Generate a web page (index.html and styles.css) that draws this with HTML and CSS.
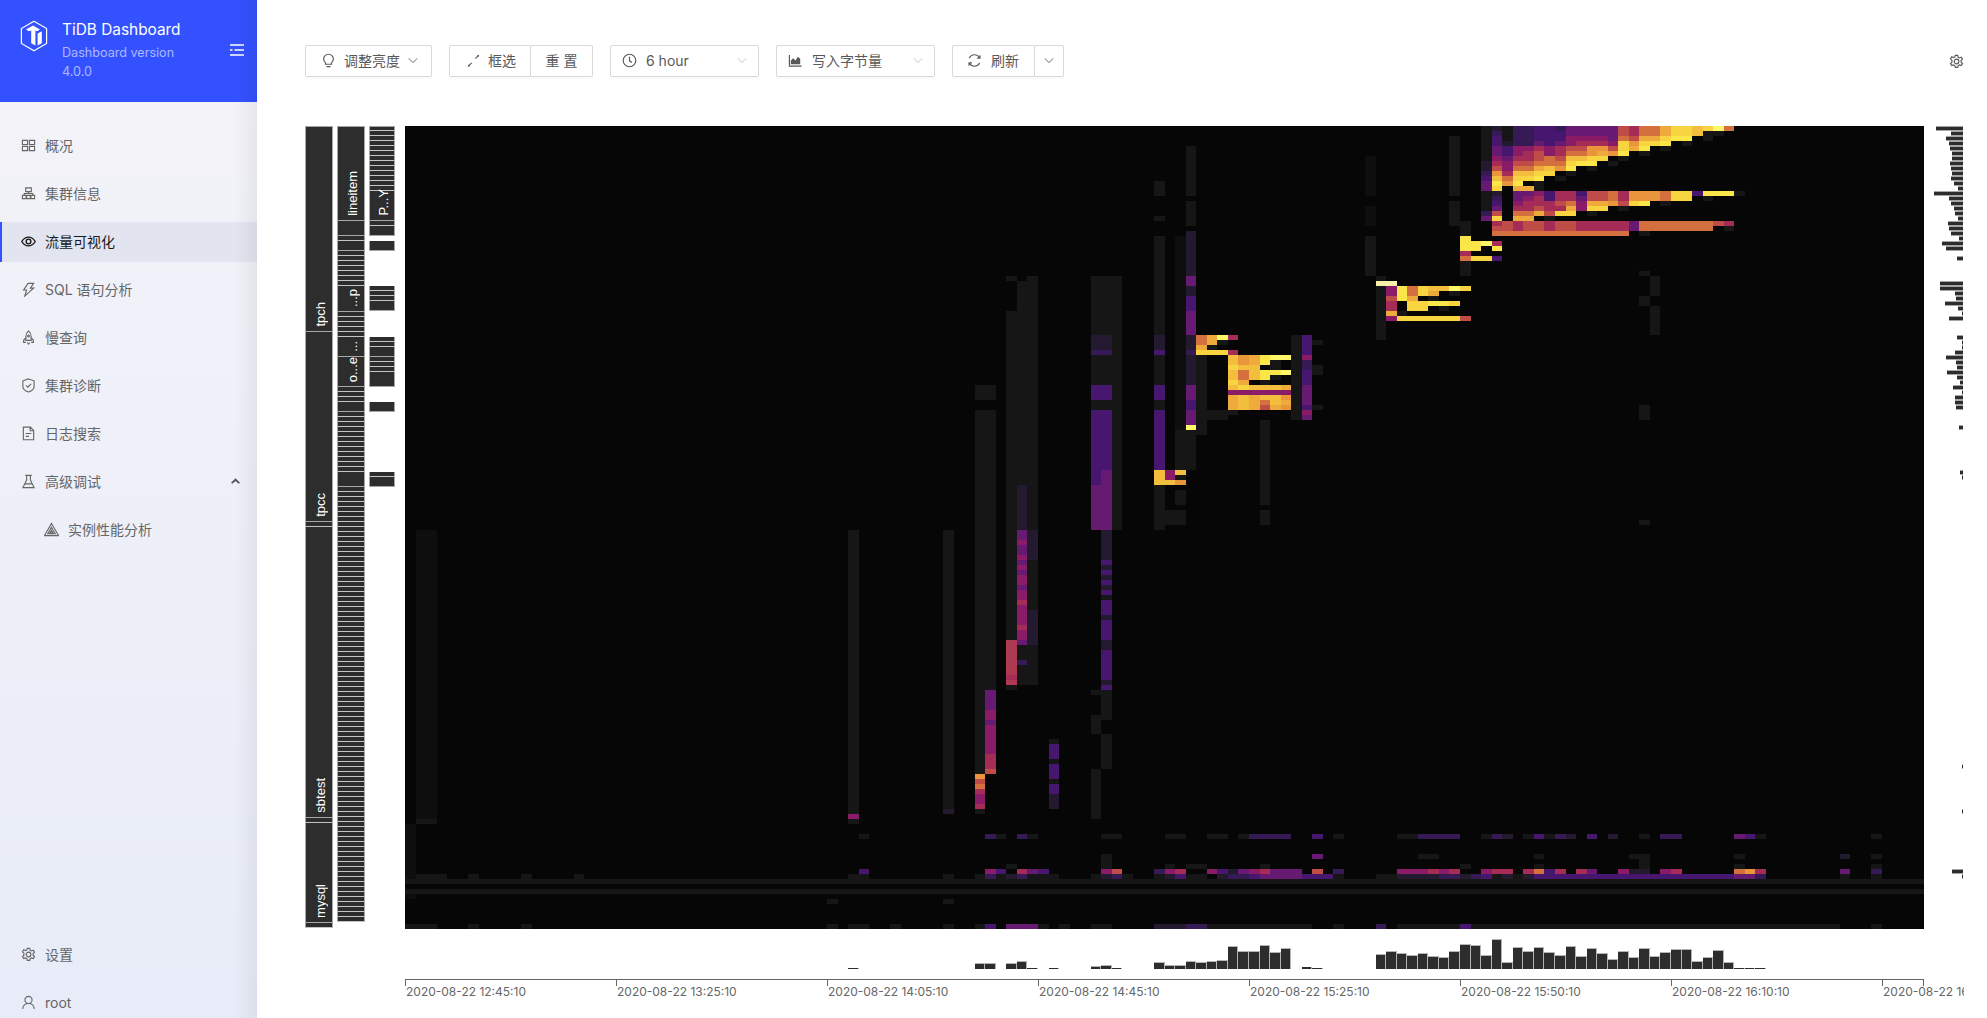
FILE: index.html
```html
<!DOCTYPE html>
<html lang="zh">
<head>
<meta charset="utf-8">
<title>TiDB Dashboard</title>
<link rel="stylesheet" href="styles.css">
</head>
<body>
<aside class="sidebar">
  <header class="brand">
    <svg class="logo" viewBox="0 0 28 32"><path class="logo-hex" d="M14 1.2 26.6 8.5V23.5L14 30.8 1.4 23.5V8.5Z"/><path class="logo-fill" d="M6 9.6 13 5.6 20 9.6 17 11.3 15.4 10.4V25.6L11.2 23.2V10.4L9 11.3ZM17.6 13.6 21.8 11.2V23.2L17.6 25.6Z"/></svg>
    <div class="brand-text">
      <div class="brand-title">TiDB Dashboard</div>
      <div class="brand-sub">Dashboard version</div>
      <div class="brand-sub">4.0.0</div>
    </div>
    <svg class="fold" viewBox="0 0 14 12"><path d="M0 1H14M4.500 6H14M0 11H14M0 6H2.500"/></svg>
  </header>
  <nav class="nav">
    <a class="nav-item"><svg class="ico" viewBox="0 0 16 16"><path d="M1.500 2.500h5.500v4.500h-5.500zM9 2.500h5.500v4.500H9zM1.500 9h5.500v4.500h-5.500zM9 9h5.500v4.500H9z"/></svg><span>概况</span></a>
    <a class="nav-item"><svg class="ico" viewBox="0 0 16 16"><path d="M5 2h6v4H5zM1.500 10h4v3.500h-4zM6 10h4v3.500H6zM10.500 10h4v3.500h-4zM8 6v2M3.500 10V8h9v2"/></svg><span>集群信息</span></a>
    <a class="nav-item active"><svg class="ico" viewBox="0 0 16 16"><path d="M.8 8C3 4.400 5.300 3.300 8 3.300s5 1.100 7.200 4.700C13 11.600 10.700 12.700 8 12.700S3 11.600.8 8Z"/><circle cx="8" cy="8" r="2.500"/></svg><span>流量可视化</span></a>
    <a class="nav-item"><svg class="ico" viewBox="0 0 16 16"><path d="M7.500 1.500h6L10 6.500h3.500L4 15l2-6.500H2.800Z"/></svg><span>SQL 语句分析</span></a>
    <a class="nav-item"><svg class="ico" viewBox="0 0 16 16"><path d="M8 1c2.200 1.800 2.800 4 2.800 6v4H5.200V7C5.200 5 5.800 2.800 8 1ZM5.200 8 2.800 11v2.200h2.400M10.800 8l2.400 3v2.200h-2.400M6.800 13.500 8 15l1.200-1.500"/><circle cx="8" cy="6.500" r="1"/></svg><span>慢查询</span></a>
    <a class="nav-item"><svg class="ico" viewBox="0 0 16 16"><path d="M8 1 14 3v6c0 3-3 5-6 6-3-1-6-3-6-6V3ZM5.300 7.800l2 2 3.500-3.600"/></svg><span>集群诊断</span></a>
    <a class="nav-item"><svg class="ico" viewBox="0 0 16 16"><path d="M2.500 1.200H10l3.500 3.500v10H2.500ZM9.800 1.500v3.500h3.500M5 8h6M5 11h3.500"/></svg><span>日志搜索</span></a>
    <a class="nav-item"><svg class="ico" viewBox="0 0 16 16"><path d="M4.500 1.500h7M6 1.500v5L2 14.500h12L10 6.500v-5M4.500 10.500h7"/></svg><span>高级调试</span><svg class="caret" viewBox="0 0 10 6"><path d="M5 0 10 5 8.500 6 5 3 1.500 6 0 5Z"/></svg></a>
    <a class="nav-item sub"><svg class="ico" viewBox="0 0 16 16"><path d="M8 1.500 15.500 14.500H.5ZM8 5.500 12 12.500H4ZM8 9 9.500 11.500h-3Z"/></svg><span>实例性能分析</span></a>
  </nav>
  <div class="nav-foot">
    <a class="nav-item"><svg class="ico" viewBox="0 0 16 16"><use href="#gear"/></svg><span>设置</span></a>
    <a class="nav-item"><svg class="ico" viewBox="0 0 16 16"><path d="M8 1.500a3.800 3.800 0 1 1 0 7.600 3.800 3.800 0 0 1 0-7.600ZM1.800 15c.3-3.600 2.800-5.900 6.200-5.900s5.900 2.300 6.200 5.900"/></svg><span>root</span></a>
  </div>
</aside>

<main class="main">
  <div class="toolbar">
    <button class="btn w-bright"><svg class="bi" viewBox="0 0 16 16"><path d="M4.800 10.500C3.500 9.500 2.800 8 2.800 6.500a5.200 5.200 0 1 1 10.400 0c0 1.500-.7 3-2 4V12H4.800ZM5.800 14.500h4.400"/></svg><span>调整亮度</span><svg class="chev" viewBox="0 0 12 8"><path d="M1 1.500 6 6.500 11 1.500"/></svg></button>
    <div class="group">
      <button class="btn w-select"><svg class="bi" viewBox="0 0 16 16"><path d="M2.500 14 6 10.500M10 6 13.500 2.500"/><circle cx="3" cy="13.500" r="1" class="solid"/><circle cx="13" cy="3" r="1" class="solid"/></svg><span>框选</span></button>
      <button class="btn w-reset"><span>重 置</span></button>
    </div>
    <div class="select w-range"><svg class="bi" viewBox="0 0 16 16"><circle cx="8" cy="8" r="6.700"/><path d="M8 4v4.500l2.500 1.500"/></svg><span class="latin">6 hour</span><svg class="chev light" viewBox="0 0 12 8"><path d="M1 1.500 6 6.500 11 1.500"/></svg></div>
    <div class="select w-type"><svg class="bi" viewBox="0 0 16 16"><path class="solid" d="M3 12V8l2.500-2.500L8 8l2.500-4L13 6v6Z"/><path d="M1.500 2v12h13"/></svg><span>写入字节量</span><svg class="chev light" viewBox="0 0 12 8"><path d="M1 1.500 6 6.500 11 1.500"/></svg></div>
    <div class="group">
      <button class="btn w-refresh"><svg class="bi" viewBox="0 0 16 16"><path d="M13.500 5.500A6 6 0 0 0 2.500 5.500M2.500 10.500a6 6 0 0 0 11 0M13.800 2.500v3h-3M2.200 13.500v-3h3"/></svg><span>刷新</span></button>
      <button class="btn w-more"><svg class="chev" viewBox="0 0 12 8"><path d="M1 1.500 6 6.500 11 1.500"/></svg></button>
    </div>
    <svg class="settings" viewBox="0 0 16 16"><use href="#gear"/></svg>
  </div>

  <section class="chart">
    <div class="labels" id="labels"></div>
    <canvas id="heat" class="heat" width="1519" height="803"></canvas>
    <canvas id="side" class="side-hist" width="40" height="803"></canvas>
  </section>
  <canvas id="bottom" class="bottom-hist" width="1519" height="40"></canvas>
  <div class="axis-clip">
    <div class="axis">
      <div class="tick">2020-08-22 12:45:10</div>
      <div class="tick">2020-08-22 13:25:10</div>
      <div class="tick">2020-08-22 14:05:10</div>
      <div class="tick">2020-08-22 14:45:10</div>
      <div class="tick">2020-08-22 15:25:10</div>
      <div class="tick">2020-08-22 15:50:10</div>
      <div class="tick">2020-08-22 16:10:10</div>
      <div class="tick last">2020-08-22 16:30:10</div>
    </div>
  </div>
</main>

<svg class="defs" width="0" height="0"><defs><symbol id="gear" viewBox="0 0 16 16"><path d="M6.700 .6h2.600l.5 2 1.400.7 1.900-.8 1.300 2.200-1.500 1.400v1.800l1.500 1.400-1.300 2.200-1.900-.8-1.400.7-.5 2H6.700l-.5-2-1.400-.7-1.900.8-1.300-2.200 1.500-1.400V5.700L1.600 4.300l1.300-2.200 1.900.8 1.400-.7Z" transform="translate(0 .9)"/><circle cx="8" cy="8" r="2.500"/></symbol></defs></svg>
<script src="chart.js"></script>
</body>
</html>
```
FILE: styles.css
```css
* { box-sizing: border-box; }
html, body { height: 100%; }
body {
  margin: 0;
  display: flex;
  overflow: hidden;
  background: #fff;
  color: #595959;
  font: 14px/1.5 Inter, "Noto Sans CJK SC", sans-serif;
}
.sidebar {
  position: relative;
  flex: none;
  width: 257px;
  height: 100vh;
  display: flex;
  flex-direction: column;
  overflow: hidden;
  background: linear-gradient(#f4f4f9, #e8ecf8);
}
.sidebar::after {
  content: "";
  position: absolute;
  top: 0;
  right: 0;
  bottom: 0;
  width: 22px;
  pointer-events: none;
  background: linear-gradient(90deg, rgba(0, 0, 0, 0), rgba(0, 0, 0, .055));
}
.brand {
  flex: none;
  height: 102px;
  display: flex;
  align-items: flex-start;
  padding: 19px 13px 0 20px;
  background: #3351ff;
  color: #fff;
}
.logo { flex: none; width: 28px; height: 32px; margin-top: 1px; }
.logo-hex { fill: none; stroke: #fff; stroke-width: 1.2; }
.logo-fill { fill: #fff; }
.brand-text { flex: 1; margin-left: 14px; }
.brand-title { font-size: 15.4px; line-height: 22px; }
.brand-sub { font-size: 12.6px; line-height: 19px; color: rgba(255, 255, 255, .6); }
.brand-title + .brand-sub { margin-top: 2px; }
.fold { flex: none; width: 14px; height: 12px; margin-top: 25px; fill: none; stroke: #fff; stroke-width: 1.6; }
.nav { display: flex; flex-direction: column; gap: 8px; margin-top: 23px; }
.nav-foot { display: flex; flex-direction: column; gap: 8px; margin-top: auto; margin-bottom: -4px; }
.nav-item {
  height: 40px;
  display: flex;
  align-items: center;
  padding-left: 21px;
  gap: 9px;
  color: #666;
}
.nav-item.active {
  background: #e2e4ef;
  border-left: 2px solid #3351ff;
  padding: 0 0 2px 19px;
  color: #1a1a1a;
  margin-top: 1px;
}
.nav-item.active .ico { stroke-width: 1.5; }
.nav-item.active + .nav-item { margin-top: -1px; }
.nav-item.sub { padding-left: 44px; }
.ico { flex: none; width: 15px; height: 15px; fill: none; stroke: currentColor; stroke-width: 1.2; }
.caret { width: 9px; height: 6px; margin-left: auto; margin-right: 17px; fill: #555; }

.main { flex: 1; min-width: 0; padding: 45px 23px 0 48px; }
.toolbar { display: flex; align-items: center; gap: 17px; height: 32px; }
.btn, .select {
  height: 32px;
  display: flex;
  align-items: center;
  flex: none;
  padding: 0 0 2px;
  background: #fff;
  border: 1px solid #d9d9d9;
  border-radius: 2px;
  box-shadow: 0 2px 0 rgba(0, 0, 0, .015);
  color: #595959;
  font: inherit;
}
.group { display: flex; flex: none; }
.group .btn + .btn { margin-left: -1px; }
.w-bright { width: 127px; padding-left: 15px; gap: 8px; }
.w-select { width: 82px; padding-left: 16px; gap: 7px; }
.w-reset { width: 63px; justify-content: center; }
.w-range { width: 149px; padding-left: 11px; gap: 9px; }
.w-type { width: 159px; padding-left: 11px; gap: 9px; }
.w-refresh { width: 83px; padding-left: 14px; gap: 9px; }
.w-more { width: 30px; justify-content: center; }
.bi { flex: none; width: 15px; height: 15px; fill: none; stroke: currentColor; stroke-width: 1.25; }
.bi .solid { fill: currentColor; stroke: none; }
.chev { flex: none; width: 10px; height: 7px; fill: none; stroke: #595959; stroke-width: 1.1; }
.select .chev { margin-left: auto; margin-right: 11px; }
.chev.light { stroke: #bfbfbf; }
.latin { font-size: 14px; }
.settings { flex: none; width: 15px; height: 15px; margin-left: auto; fill: none; stroke: #595959; stroke-width: 1.2; }

.chart { display: flex; height: 803px; margin-top: 49px; }
.labels { flex: none; width: 100px; display: flex; gap: 4px; align-items: flex-start; }
.lab-col { flex: none; width: 28px; display: flex; flex-direction: column; }
.lab-col.narrow { width: 26px; }
.cell {
  display: flex;
  justify-content: center;
  align-items: flex-end;
  padding: 0 0 4px 2px;
  background: #2d2d2d;
  border: solid #a6a6a6;
  border-width: 0 1px 1px;
  color: #fff;
  font: 13px/1 "Liberation Sans", sans-serif;
  white-space: nowrap;
}
.cell.top { border-top-width: 1px; }
.cell.thin { padding: 0; border-bottom-color: #c4c4c4; }
.cell.gap { background: none; border: 0; padding: 0; }
.cell span { display: block; writing-mode: vertical-rl; transform: rotate(180deg); }
.heat { display: block; flex: none; width: 1519px; height: 803px; }
.side-hist { display: block; flex: none; width: 40px; height: 803px; }
.bottom-hist { display: block; width: 1519px; height: 40px; margin-left: 100px; }
.axis-clip { width: 1559px; margin: 10px 0 0 100px; overflow: hidden; }
.axis { display: flex; width: 1519px; height: 28px; border-top: 1px solid #666; position: relative; }
.axis::after { content: ""; position: absolute; top: 0; right: 0; width: 1px; height: 6px; background: #666; }
.tick {
  flex: none;
  width: 211px;
  height: 6px;
  border-left: 1px solid #666;
  padding-top: 4px;
  font-size: 12px;
  line-height: 16px;
  color: #666;
  white-space: nowrap;
  overflow: visible;
}
.tick.last { width: 42px; }
.defs { position: absolute; }
```
FILE: chart.js
```js
(function () {
  var PAL = {
    z: '#0e0e0e', a: '#161616', b: '#241a30', c: '#351a55', d: '#47166e', e: '#661a72',
    f: '#8a1b66', g: '#a52c56', G: '#ad3a50', h: '#c04c48', i: '#d4703e', j: '#e8953c', k: '#eeab3c',
    l: '#f3bd3e', m: '#f7d440', n: '#fae648', o: '#fcf668', y: '#f8f0a8'
  };
  var CW = 10.55, ROWS = 161;

  // vertical runs: column, first row, last row, colour key
  var runs = [
    [0,140,150,'z'],[1,81,139,'z'],[2,81,139,'z'],[42,81,137,'a'],[51,81,137,'a'],
    [54,52,54,'a'],[55,52,54,'a'],[54,57,129,'a'],[55,57,112,'a'],
    [57,30,30,'a'],[57,37,102,'a'],[58,31,71,'a'],[59,30,103,'a'],[58,72,80,'b'],[59,81,86,'b'],[59,97,103,'b'],
    [57,112,112,'a'],[58,104,111,'a'],[59,104,111,'a'],
    [65,30,41,'a'],[66,30,41,'a'],[65,42,44,'b'],[66,42,44,'b'],[65,45,45,'c'],[66,45,45,'c'],
    [65,46,51,'a'],[66,46,51,'a'],[65,52,54,'d'],[66,52,54,'d'],[65,55,56,'a'],[66,55,56,'a'],
    [65,57,68,'d'],[66,57,68,'d'],[65,69,71,'d'],[66,69,71,'e'],[65,72,80,'e'],[66,72,80,'e'],
    [67,30,80,'a'],[66,81,86,'b'],[65,113,113,'a'],[66,113,118,'a'],[65,118,121,'a'],[66,122,128,'a'],[65,129,138,'a'],
    [71,11,13,'a'],[71,18,18,'a'],[71,22,41,'a'],[71,42,44,'b'],[71,45,45,'d'],[71,46,51,'a'],[71,52,54,'d'],
    [71,55,56,'a'],[71,57,68,'d'],[71,72,80,'a'],
    [73,22,68,'z'],[73,61,68,'a'],[74,61,68,'a'],[73,73,75,'a'],[72,77,79,'a'],[73,77,79,'a'],
    [74,4,13,'a'],[74,15,19,'a'],[74,21,29,'b'],[74,30,31,'e'],[74,32,33,'b'],[74,34,36,'d'],[74,37,41,'e'],[74,42,44,'b'],
    [74,45,45,'c'],[74,46,51,'b'],[74,52,54,'e'],[74,55,56,'d'],[74,57,59,'e'],
    [75,46,61,'a'],[76,57,58,'a'],[77,57,58,'a'],[78,57,57,'a'],[81,59,75,'a'],[81,77,79,'a'],
    [84,42,58,'a'],[85,42,45,'d'],[85,46,46,'f'],[85,47,48,'c'],[85,49,51,'d'],[85,52,55,'e'],[85,56,56,'d'],[85,57,57,'f'],[85,58,58,'e'],
    [86,43,43,'a'],[86,48,49,'a'],[86,56,56,'a'],
    [91,6,13,'z'],[91,16,19,'z'],[91,22,29,'a'],[92,30,30,'a'],[92,32,42,'a'],
    [99,2,13,'a'],[99,15,19,'a'],[100,19,21,'a'],[100,27,29,'a'],[99,33,33,'a'],
    [117,29,29,'a'],[118,30,33,'a'],[117,34,35,'a'],[118,36,41,'a'],[117,56,58,'a'],[117,79,79,'a'],
    [0,151,151,'a'],[0,154,154,'z']
  ];

  // horizontal strings: row, first column, keys ('.' leaves the cell alone)
  var rows = [
    [0,102,'abaccddceeeeehgiikmmlmoi'],[1,102,'acaccdddeeeeehgiikmmlaa'],[2,102,'adaccdddffffeihkkmnn.a'],
    [3,102,'adbccedefgggfmjmmn.a'],[4,102,'aedffgfghhjjhmkn.a'],[5,102,'aedfghfgiijkjn.a'],
    [6,102,'afegghihllmm.a'],[7,102,'bgfhhiiimnn.a'],[8,102,'bhfiikljn.a'],[9,102,'cjgllmm.a'],
    [10,102,'dlimmn.a'],[11,102,'enjn.a'],[12,102,'em.kka'],
    [13,102,'ab.eefdggdhhigjjjimmdnnna'],[14,102,'ac.efgdggehhigjjjimm.a'],[15,102,'ad.fggghifkkjhmn.a'],
    [16,102,'ae.gghggkfmm.a'],[17,102,'ch.iikhmm.a'],[18,102,'em.kk.a'],
    [19,103,'ghghhghhgggggeiiiiiiihg'],[20,103,'hhghhghhgggggeiiiiiii.a'],[21,103,'iiiiiiiiiiiii.a'],
    [22,100,'n'],[23,100,'nnog'],[24,100,'nn.n'],[25,100,'g'],[26,100,'immd'],
    [31,92,'yy'],[32,93,'fnimllom'],[33,93,'fnimk'],[34,93,'hnk.a'],[35,93,'g.mmnnm'],[36,93,'g.mm.a'],[37,93,'ka'],[38,93,'fmmmmmmh'],
    [42,75,'ikog'],[43,75,'ika'],[44,75,'ka'],[45,75,'mmmg'],
    [46,78,'ljknoo'],[47,78,'ljkna'],[48,78,'mll.a'],[49,78,'lilnno'],[50,78,'lilna'],[51,78,'mk.a'],
    [52,78,'lmlllk'],[53,78,'ffffff'],[54,78,'klkllj'],[55,78,'klkilk'],[56,78,'klkhkj'],
    [60,74,'o'],
    [69,71,'lfl'],[70,71,'lfa'],[71,71,'llj'],
    [81,58,'e'],[82,58,'e'],[83,58,'f'],[84,58,'e'],[85,58,'e'],[86,58,'f'],[87,58,'e'],[88,58,'f'],[89,58,'e'],
    [90,58,'f'],[91,58,'f'],[92,58,'e'],[93,58,'f'],[94,58,'f'],[95,58,'g'],[96,58,'f'],[97,58,'f'],[98,58,'f'],
    [99,58,'f'],[100,58,'g'],[101,58,'f'],[102,58,'f'],[103,58,'e'],
    [103,57,'G'],[104,57,'G'],[105,57,'G'],[106,57,'G'],[107,57,'Gc'],[108,57,'G'],[109,57,'G'],[110,57,'g'],[111,57,'G'],
    [87,66,'d'],[88,66,'b'],[89,66,'d'],[90,66,'b'],[91,66,'d'],[92,66,'b'],[93,66,'d'],[94,66,'a'],[95,66,'d'],[96,66,'d'],[97,66,'d'],
    [98,66,'b'],[99,66,'d'],[100,66,'d'],[101,66,'d'],[102,66,'d'],[103,66,'b'],[104,66,'b'],[105,66,'d'],[106,66,'d'],[107,66,'d'],
    [108,66,'d'],[109,66,'d'],[110,66,'d'],[111,66,'b'],[112,66,'d'],
    [113,55,'e'],[114,55,'e'],[115,55,'e'],[116,55,'e'],[117,55,'f'],[118,55,'f'],[119,55,'e'],[120,55,'f'],[121,55,'f'],[122,55,'f'],
    [123,55,'f'],[124,55,'f'],[125,55,'f'],[126,55,'g'],[127,55,'g'],[128,55,'g'],[129,55,'h'],
    [130,54,'j'],[131,54,'h'],[132,54,'i'],[133,54,'g'],[134,54,'f'],[135,54,'f'],[136,54,'g'],[137,54,'a'],
    [123,61,'a'],[124,61,'d'],[125,61,'d'],[126,61,'d'],[127,61,'a'],[128,61,'d'],[129,61,'d'],[130,61,'d'],[131,61,'a'],
    [132,61,'d'],[133,61,'d'],[134,61,'b'],[135,61,'b'],[136,61,'b'],
    [137,51,'b'],[138,42,'f'],[139,42,'a'],[139,1,'aa'],[142,43,'a'],
    [142,55,'ca.ca'],[142,66,'aa'],[142,72,'aa'],[142,76,'aa.acccc'],[142,86,'d.a'],
    [142,94,'aacccc'],[142,102,'acb.adacb.d'],[142,114,'b'],[142,117,'a.cc'],[142,126,'eda'],[142,139,'a'],
    [146,66,'a'],[146,86,'e'],[146,96,'aa'],[146,107,'a'],[146,116,'aa'],[146,126,'a'],[146,136,'b'],[146,139,'a'],
    [147,66,'a'],[147,117,'a'],
    [148,57,'a'],[148,66,'a'],[148,72,'a'],[148,74,'aa'],[148,81,'a'],[148,100,'a'],[148,107,'a'],[148,117,'a'],[148,126,'a'],[148,139,'a'],
    [149,43,'d'],[149,55,'fd.ged'],[149,66,'fh'],[149,71,'cfg'],
    [149,76,'fdbefgeee'],[149,86,'h.c'],[149,94,'fffgf'],[149,99,'g'],[149,102,'fgg.gidg.ge'],[149,115,'fbb.fg'],[149,126,'ijg'],[149,136,'e'],[149,139,'c'],
    [150,1,'aaa'],[150,6,'a'],[150,11,'a'],[150,16,'a'],[150,42,'aa'],[150,51,'a'],[150,54,'acabcaaa'],[150,65,'abca'],
    [150,71,'abdaa'],[150,77,'bccdeeeeddd'],[150,88,'a'],[150,92,'aabbbbccbcd'],[150,103,'ababd'],
    [150,108,'ddddddddddddddddddeec'],[150,136,'a'],[150,139,'a'],
    [155,40,'a'],[155,51,'a'],
    [160,0,'aaa'],[160,6,'a'],[160,11,'a'],[160,40,'a'],[160,42,'aa'],[160,46,'a'],[160,51,'a'],[160,54,'ad.eee'],[160,60,'a.a'],
    [160,65,'aa'],[160,71,'bbbc'],[160,75,'c'],[160,76,'aaaaaaaaaa'],[160,88,'a'],[160,92,'c'],[160,94,'aaaaaa'],[160,100,'d'],[160,139,'a']
  ];

  // bottom histogram: column -> height in px
  var bars = {42:1,54:6,55:6,57:6,58:8,59:1,61:1,65:3,66:4,67:1,71:7,72:4,73:4,74:8,75:7,76:8,77:9,78:23,79:18,80:18,81:24,82:17,83:21,
    85:2,86:1,92:15,93:18,94:16,95:14,96:16,97:13,98:12,99:18,100:25,101:24,102:14,103:30,104:7,105:22,106:18,107:22,108:17,109:14,
    110:23,111:13,112:21,113:16,114:10,115:18,116:12,117:21,118:13,119:17,120:20,121:20,122:8,123:12,124:19,125:7,126:1,127:1,128:1};

  // side histogram: lengths for successive 5px rows from the top
  var side = [27,12,17,14,13,11,11,13,12,11,12,9,5,29,14,12,9,8,5,15,14,12,4,21,17,0,6,0,0,0,0,23,23,8,7,18,5,1,14,0,0,0,6,1,1,8,17,7,6,16,6,3,10,1,8,8,7,0,0,0,4,0,0,0,0,0,0,0,0,3,1];
  var sideExtra = [[128,1],[137,1],[149,11],[150,1]];

  function drawHeat() {
    var ctx = document.getElementById('heat').getContext('2d');
    var W = 1519, H = 803;
    ctx.fillStyle = '#060606';
    ctx.fillRect(0, 0, W, H);
    function cell(c, r, key) {
      var x0 = Math.round(c * CW), x1 = Math.round((c + 1) * CW);
      var y0 = Math.round(r * H / ROWS), y1 = Math.round((r + 1) * H / ROWS);
      ctx.fillStyle = PAL[key];
      ctx.fillRect(x0, y0, x1 - x0, y1 - y0);
    }
    var i, c;
    for (c = 0; c < 144; c++) { cell(c, 151, 'a'); cell(c, 153, 'a'); }
    for (c = 101; c < 136; c++) { cell(c, 160, 'a'); }
    runs.forEach(function (v) { for (var q = v[1]; q <= v[2]; q++) cell(v[0], q, v[3]); });
    rows.forEach(function (v) {
      for (i = 0; i < v[2].length; i++) {
        if (v[2][i] !== '.') cell(v[1] + i, v[0], v[2][i]);
      }
    });
  }

  function drawBottom() {
    var ctx = document.getElementById('bottom').getContext('2d');
    Object.keys(bars).forEach(function (k) {
      var c = +k, h = bars[k];
      var x0 = Math.round(c * CW), x1 = Math.round((c + 1) * CW);
      ctx.fillStyle = '#b4b4b4';
      ctx.fillRect(x0, 40 - h, x1 - x0, h);
      ctx.fillStyle = '#2d2d2d';
      ctx.fillRect(x0, 40 - h + (h > 2 ? 1 : 0), x1 - x0 - 1, h - (h > 2 ? 1 : 0));
    });
  }

  function drawSide() {
    var ctx = document.getElementById('side').getContext('2d');
    function bar(r, w) {
      if (!w) return;
      var y = Math.round(r * 803 / 161);
      ctx.fillStyle = '#a6a6a6';
      ctx.fillRect(39 - w, y, w, 5);
      ctx.fillStyle = '#2d2d2d';
      ctx.fillRect(39 - w, y + 1, w, 3);
    }
    side.forEach(function (w, r) { bar(r, w); });
    sideExtra.forEach(function (v) { bar(v[0], v[1]); });
  }

  // label columns: [height, text] ; kind t = thin band, g = white gap
  function thin(n) { var a = []; for (var i = 0; i < n; i++) a.push([5, '', 't']); return a; }
  var col1 = [[206,'tpch'],[190,'tpcc'],[5,'','t'],[291,'sbtest'],[5,'','t'],[100,'mysql'],[5,'','t']];
  var col2 = [[95,'lineitem'],[15,''],[5,'','t'],[10,'']]
    .concat(thin(7), [[26,'...p']], thin(5), [[20,'...'],[30,'o...e']], thin(3), [[10,'']], thin(12), [[15,'']], thin(87));
  var col3 = thin(13).concat(
    [[30,'P...Y'],[5,'','t'],[10,''],[5,0,'g'],[10,''],[35,0,'g']],
    thin(3), [[10,''],[26,0,'g']], thin(2), [[10,'']], thin(3), [[15,''],[15,0,'g'],[10,''],[60,0,'g']], thin(1), [[10,'']]);

  function buildCol(data, narrow) {
    var col = document.createElement('div');
    col.className = 'lab-col' + (narrow ? ' narrow' : '');
    data.forEach(function (d, i) {
      var cell = document.createElement('div');
      cell.className = 'cell' + (d[2] === 't' ? ' thin' : '') + (d[2] === 'g' ? ' gap' : '') + (i === 0 ? ' top' : '');
      cell.style.height = d[0] + 'px';
      if (d[1]) {
        var s = document.createElement('span');
        s.textContent = d[1];
        cell.appendChild(s);
      }
      col.appendChild(cell);
    });
    return col;
  }
  var host = document.getElementById('labels');
  host.appendChild(buildCol(col1));
  host.appendChild(buildCol(col2));
  host.appendChild(buildCol(col3, true));

  drawHeat();
  drawBottom();
  drawSide();
})();
```
